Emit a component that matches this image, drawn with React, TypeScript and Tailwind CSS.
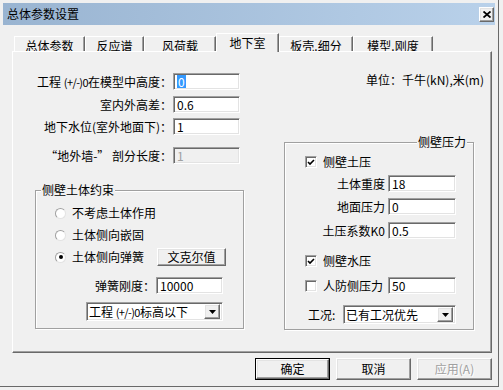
import React from 'react'

const raised =
  'bg-[#f0f0f0] border border-t-white border-l-white border-r-[#696969] border-b-[#696969] shadow-[inset_-1px_-1px_0_#a0a0a0,inset_1px_1px_0_#e3e3e3]'
const sunken =
  'border border-t-[#a0a0a0] border-l-[#a0a0a0] border-r-white border-b-white shadow-[inset_1px_1px_0_#696969,inset_-1px_-1px_0_#e3e3e3]'

function Field({ value, width = 'w-[67px]', disabled = false, selected = false }: { value: string; width?: string; disabled?: boolean; selected?: boolean }) {
  return (
    <div className={`${sunken} ${width} h-[17px] pl-[3px] flex items-center ${disabled ? 'bg-[#f0f0f0] text-[#a0a0a0]' : 'bg-white'}`}>
      {selected ? <span className="bg-[#3399ff] text-white leading-[13px] px-[1px]">{value}</span> : value}
    </div>
  )
}

function Radio({ label, checked = false }: { label: string; checked?: boolean }) {
  return (
    <div className="flex items-center">
      <div className="w-[11px] h-[11px] rounded-full bg-white border border-t-[#a0a0a0] border-l-[#a0a0a0] border-r-[#e3e3e3] border-b-[#e3e3e3] flex items-center justify-center">
        {checked && <div className="w-[4px] h-[4px] rounded-full bg-black" />}
      </div>
      <span className="ml-[6px]">{label}</span>
    </div>
  )
}

function Check({ checked = false }: { checked?: boolean }) {
  return (
    <div className={`${sunken} w-[12px] h-[12px] bg-white flex items-center justify-center`}>
      {checked && (
        <svg width="8" height="7" viewBox="0 0 8 7">
          <path d="M1 3 L3 5 L7 1" stroke="black" strokeWidth="1.6" fill="none" />
        </svg>
      )}
    </div>
  )
}

function Select({ children, width }: { children: React.ReactNode; width: string }) {
  return (
    <div className={`${sunken} ${width} h-[19px] bg-white flex items-center pl-[2px] pr-[2px]`}>
      <span className="flex-1 whitespace-nowrap">{children}</span>
      <div className={`${raised} w-[16px] h-[15px] flex items-center justify-center`}>
        <svg width="7" height="4" viewBox="0 0 7 4">
          <path d="M0 0 H7 L3.5 4 Z" fill="black" />
        </svg>
      </div>
    </div>
  )
}

function GroupBox({ title, right = false, className, children }: { title: string; right?: boolean; className: string; children: React.ReactNode }) {
  return (
    <div className={`relative border border-[#a0a0a0] shadow-[1px_1px_0_#fff,inset_1px_1px_0_#fff] ${className}`}>
      <span className={`absolute -top-[8px] px-[1px] bg-[#f0f0f0] ${right ? 'right-[6px]' : 'left-[5px]'}`}>{title}</span>
      {children}
    </div>
  )
}

// the (+/-)0 part is narrow in the original bitmap font
const Pm = () => <span className="text-[11px] tracking-[-0.6px]">(+/-)0</span>

const tabs = [
  { label: '总体参数', w: 'w-[71px]' },
  { label: '反应谱', w: 'w-[59px]' },
  { label: '风荷载', w: 'w-[72px]' },
  { label: '地下室', w: 'w-[63px]', active: true },
  { label: '板壳.细分', w: 'w-[74px]' },
  { label: '模型.刚度', w: 'w-[80px]' },
]

export default function App() {
  return (
    <div className="w-[503px] h-[390px] bg-[#f0f0f0] overflow-hidden text-[12px] leading-[14px] text-black font-['Noto_Sans_CJK_SC','Liberation_Sans',sans-serif]">
      <div className="w-[499px] h-[387px] flex flex-col border-r border-b border-r-[#696969] border-b-[#696969]">
        {/* title bar */}
        <div className="mt-[3px] mx-[3px] h-[22px] flex items-center pl-[4px] pr-[1px] bg-linear-to-r from-[#99b4d1] to-[#b9d1ea]">
          <span className="flex-1">总体参数设置</span>
          <div className={`${raised} w-[15px] h-[15px] flex items-center justify-center`}>
            <svg width="8" height="7" viewBox="0 0 8 7">
              <path d="M0.5 0.5 L7.5 6.5 M7.5 0.5 L0.5 6.5" stroke="black" strokeWidth="1.8" />
            </svg>
          </div>
        </div>

        {/* tabs */}
        <div className="mt-[8px] ml-[14px] h-[18px] flex items-end">
          {tabs.map((t) => (
            <div
              key={t.label}
              className={`${t.w} flex justify-center border-t border-l border-t-white border-l-white border-r border-r-[#696969] shadow-[inset_-1px_0_0_#a0a0a0] ${
                t.active ? 'relative z-10 h-[19px] -mb-[1px] pt-[2px] bg-[#f0f0f0]' : 'h-[15px] pt-[2px]'
              }`}
            >
              {t.label}
            </div>
          ))}
        </div>

        {/* tab page */}
        <div className="ml-[12px] w-[480px] h-[302px] flex border-t border-l border-t-white border-l-white border-r border-b border-r-[#696969] border-b-[#696969] shadow-[inset_-1px_-1px_0_#a0a0a0]">
          <div className="w-[231px] flex flex-col pt-[21px]">
            <div className="flex h-[17px] items-center">
              <span className="w-[159px] text-right whitespace-nowrap">工程 <Pm />在模型中高度：</span>
              <div className="ml-[1px]"><Field value="0" selected /></div>
            </div>
            <div className="flex h-[17px] items-center mt-[6px]">
              <span className="w-[159px] text-right">室内外高差：</span>
              <div className="ml-[1px]"><Field value="0.6" /></div>
            </div>
            <div className="flex h-[17px] items-center mt-[5px]">
              <span className="w-[159px] text-right whitespace-nowrap">地下水位(室外地面下)：</span>
              <div className="ml-[1px]"><Field value="1" /></div>
            </div>
            <div className="flex h-[17px] items-center mt-[12px]">
              <span className="w-[159px] text-right whitespace-nowrap">“地外墙-” 剖分长度：</span>
              <div className="ml-[1px]"><Field value="1" disabled /></div>
            </div>

            <GroupBox title="侧壁土体约束" className="ml-[22px] mt-[26px] w-[209px] h-[139px]">
              <div className="flex flex-col pt-[14px] pl-[19px]">
                <div className="h-[16px] flex items-center"><Radio label="不考虑土体作用" /></div>
                <div className="h-[16px] flex items-center mt-[6px]"><Radio label="土体侧向嵌固" /></div>
                <div className="h-[18px] flex items-center mt-[5px]">
                  <Radio label="土体侧向弹簧" checked />
                  <div className={`${raised} ml-[13px] w-[69px] h-[18px] flex items-center justify-center`}>文克尔值</div>
                </div>
                <div className="flex h-[17px] items-center mt-[11px]">
                  <span className="w-[100px] text-right">弹簧刚度：</span>
                  <div className="ml-[1px]"><Field value="10000" /></div>
                </div>
                <div className="mt-[8px] ml-[31px]">
                  <Select width="w-[137px]">工程 <Pm />标高以下</Select>
                </div>
              </div>
            </GroupBox>
          </div>

          <div className="flex-1 flex flex-col pt-[21px]">
            <span className="self-end mr-[7px]">单位：千牛(kN),米(m)</span>
            <GroupBox title="侧壁压力" right className="ml-[40px] mt-[55px] w-[190px] h-[188px]">
              <div className="flex flex-col pt-[12px] pl-[20px]">
                <div className="h-[14px] flex items-center">
                  <Check checked />
                  <span className="ml-[6px]">侧壁土压</span>
                </div>
                {[
                  ['土体重度', '18', 'mt-[6px]'],
                  ['地面压力', '0', 'mt-[6px]'],
                  ['土压系数K0', '0.5', 'mt-[7px]'],
                ].map(([l, v, m]) => (
                  <div key={l} className={`flex h-[17px] items-center ${m}`}>
                    <span className="w-[80px] text-right whitespace-nowrap">{l}</span>
                    <div className="ml-[3px]"><Field value={v} width="w-[68px]" /></div>
                  </div>
                ))}
                <div className="h-[14px] flex items-center mt-[15px]">
                  <Check checked />
                  <span className="ml-[6px]">侧壁水压</span>
                </div>
                <div className="flex h-[17px] items-center mt-[9px]">
                  <div className="w-[83px] flex items-center">
                    <Check />
                    <span className="ml-[6px] whitespace-nowrap">人防侧压力</span>
                  </div>
                  <Field value="50" width="w-[68px]" />
                </div>
                <div className="flex h-[19px] items-center mt-[11px]">
                  <span className="ml-[3px] w-[35px] whitespace-nowrap">工况:</span>
                  <Select width="w-[113px]">已有工况优先</Select>
                </div>
              </div>
            </GroupBox>
          </div>
        </div>

        {/* buttons */}
        <div className="mt-[5px] ml-[12px] w-[480px] flex justify-end gap-[6px]">
          <div className="border border-black">
            <div className={`${raised} w-[73px] h-[20px] flex items-center justify-center`}>确定</div>
          </div>
          <div className={`${raised} w-[75px] h-[22px] flex items-center justify-center`}>取消</div>
          <div className={`${raised} w-[75px] h-[22px] flex items-center justify-center text-[#a0a0a0] [text-shadow:1px_1px_0_#fff]`}>应用(A)</div>
        </div>
      </div>
    </div>
  )
}
